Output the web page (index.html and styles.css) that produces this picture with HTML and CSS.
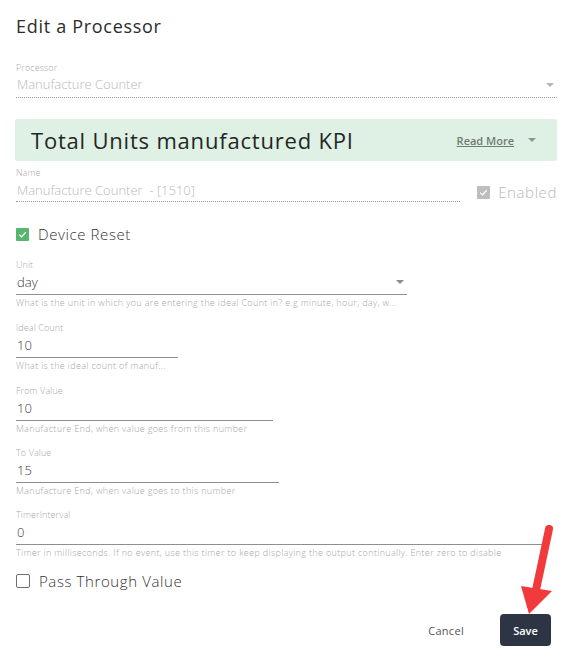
FILE: index.html
```html
<!DOCTYPE html>
<html>
<head>
    <meta charset="utf-8">
    <title>Edit a Processor</title>
    <link rel="stylesheet" href="styles.css">
</head>
<body>
    <main class="dialog">
        <h1 class="dialog-title">Edit a Processor</h1>

        <!-- processor type, locked while editing -->
        <div class="field field-processor">
            <label class="field-label">Processor</label>
            <div class="field-input is-disabled">Manufacture Counter<span class="caret"></span></div>
        </div>

        <div class="kpi-banner">
            <span class="kpi-title">Total Units manufactured KPI</span>
            <a class="read-more" href="#">Read More</a>
            <span class="caret caret-dark"></span>
        </div>

        <div class="name-row">
            <div class="field field-name">
                <label class="field-label">Name</label>
                <div class="field-input is-disabled">Manufacture Counter&nbsp; - [1510]</div>
            </div>
            <label class="check check-disabled">
                <span class="box box-grey">
                    <svg viewBox="0 0 14 14"><path d="M3.5 7.2l2.4 2.4 4.6-5" fill="none" stroke="#fff" stroke-width="1.3"/></svg>
                </span>
                <span class="check-text">Enabled</span>
            </label>
        </div>

        <label class="check check-reset">
            <span class="box box-green">
                <svg viewBox="0 0 14 14"><path d="M3.5 7.2l2.4 2.4 4.6-5" fill="none" stroke="#fff" stroke-width="1.3"/></svg>
            </span>
            <span class="check-text">Device Reset</span>
        </label>

        <div class="field w-unit">
            <label class="field-label">Unit</label>
            <div class="field-input">day<span class="caret"></span></div>
            <div class="field-help">What is the unit in which you are entering the ideal Count in? e.g minute, hour, day, w...</div>
        </div>

        <div class="field w-ideal">
            <label class="field-label">Ideal Count</label>
            <div class="field-input">10</div>
            <div class="field-help">What is the ideal count of manuf...</div>
        </div>

        <div class="field w-from">
            <label class="field-label">From Value</label>
            <div class="field-input">10</div>
            <div class="field-help">Manufacture End, when value goes from this number</div>
        </div>

        <div class="field w-to">
            <label class="field-label">To Value</label>
            <div class="field-input">15</div>
            <div class="field-help">Manufacture End, when value goes to this number</div>
        </div>

        <div class="field w-timer">
            <label class="field-label">TimerInterval</label>
            <div class="field-input">0</div>
            <div class="field-help">Timer in milliseconds. If no event, use this timer to keep displaying the output continually. Enter zero to disable</div>
        </div>

        <label class="check check-pass">
            <span class="box box-empty"></span>
            <span class="check-text">Pass Through Value</span>
        </label>

        <div class="actions">
            <button class="btn-cancel">Cancel</button>
            <button class="btn-save">Save</button>
        </div>

        <!-- red pointer towards the save button -->
        <svg class="pointer" width="571" height="657" viewBox="0 0 571 657">
            <g fill="#f23a3c">
                <line x1="549" y1="529" x2="536" y2="590" stroke="#f23a3c" stroke-width="8" stroke-linecap="round"/>
                <polygon points="521,586 552,591 529,614"/>
            </g>
        </svg>
    </main>
</body>
</html>
```

FILE: styles.css
```css
* {
    box-sizing: border-box;
}

body {
    margin: 0;
    background: #fff;
    font-family: "Open Sans", "DejaVu Sans", sans-serif;
    font-weight: 300;
    color: #333;
}

.dialog {
    position: relative;
    width: 571px;
    height: 657px;
    padding: 14px 14px 0 16px;
}

.dialog-title {
    margin: 0 0 24px;
    font-size: 18px;
    line-height: 24px;
    font-weight: 400;
    letter-spacing: 0.7px;
    color: #2b2b2b;
}

/* text fields */
.field {
    margin-bottom: 13px;
}

.field-label {
    display: block;
    font-size: 9px;
    line-height: 12px;
    color: #a9a9a9;
    letter-spacing: 0.1px;
}

.field-input {
    position: relative;
    padding: 2px 0 3px 1px;
    font-size: 13px;
    line-height: 18px;
    color: #3a3a3a;
    border-bottom: 1px solid #8f8f8f;
}

.field-input.is-disabled {
    color: #b9b9b9;
    border-bottom: 1px dotted #9a9a9a;
}

.field-help {
    margin-top: 2px;
    font-size: 9px;
    line-height: 12px;
    color: #a6a6a6;
    letter-spacing: 0.35px;
    white-space: nowrap;
}

.field-processor {
    margin-bottom: 21px;
}

.field-processor .field-input {
    padding-top: 1px;
    padding-bottom: 4px;
}

.caret {
    position: absolute;
    right: 3px;
    top: 9px;
    width: 0;
    height: 0;
    border-left: 4px solid transparent;
    border-right: 4px solid transparent;
    border-top: 4px solid #8a8a8a;
}

.is-disabled .caret {
    border-top-color: #b5b5b5;
}

.w-unit { width: 391px; }
.w-ideal { width: 162px; }
.w-from { width: 257px; margin-bottom: 12px; }
.w-to { width: 263px; margin-bottom: 12px; }
.w-timer { width: 527px; }

/* KPI header */
.kpi-banner {
    display: flex;
    align-items: center;
    height: 42px;
    margin: 0 0 0 -1px;
    padding: 0 21px 0 16px;
    background: #dff0e5;
    border-radius: 3px;
}

.kpi-title {
    flex: 1;
    font-size: 22px;
    font-weight: 500;
    color: #1f2823;
    letter-spacing: 0.8px;
}

.read-more {
    font-size: 11px;
    font-weight: 600;
    color: #6f7d74;
    text-decoration: underline;
    margin-right: 14px;
}

.caret-dark {
    position: static;
    border-top-color: #8d978f;
}

.name-row {
    display: flex;
    align-items: flex-end;
    margin-top: 6px;
}

.field-name {
    flex: 1;
    margin-right: 17px;
    margin-bottom: 0;
}

.field-name .field-input {
    padding-bottom: 2px;
}

/* checkboxes */
.check {
    display: flex;
    align-items: center;
    gap: 9px;
    font-size: 15px;
    line-height: 18px;
    letter-spacing: 0.6px;
    color: #333;
}

.check-disabled {
    gap: 8px;
    margin-bottom: 1px;
    color: #b9b9b9;
}

.check-reset {
    margin: 23px 0 16px;
}

.check-pass {
    margin-top: 9px;
}

.box {
    display: block;
    flex: none;
    width: 13px;
    height: 13px;
    border-radius: 1px;
}

.box svg {
    display: block;
    width: 13px;
    height: 13px;
}

.box-grey { background: #bdbdbd; }
.box-green { background: #58b56e; }

.box-empty {
    width: 14px;
    height: 14px;
    border: 1px solid #6f6f6f;
    border-radius: 2px;
}

/* footer buttons */
.actions {
    display: flex;
    justify-content: flex-end;
    align-items: center;
    gap: 36px;
    margin-top: 24px;
    padding-right: 6px;
}

.btn-cancel,
.btn-save {
    font-family: inherit;
    font-size: 11px;
    border: none;
    cursor: pointer;
}

.btn-cancel {
    background: none;
    color: #555;
    font-weight: 400;
    letter-spacing: 0.3px;
    padding: 0;
}

.btn-save {
    width: 51px;
    height: 32px;
    background: #2d3544;
    color: #fff;
    font-weight: 600;
    border-radius: 4px;
}

.pointer {
    position: absolute;
    left: 0;
    top: 0;
    pointer-events: none;
}
```
